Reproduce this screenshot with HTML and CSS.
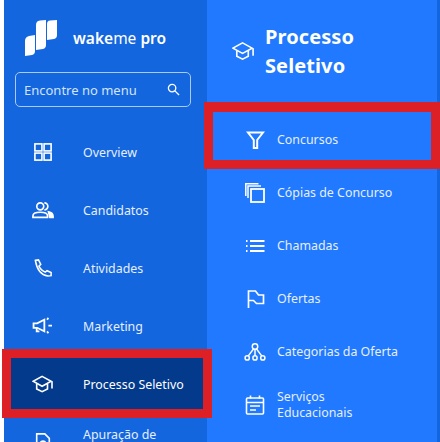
FILE: index.html
```html
<!DOCTYPE html>
<html lang="en">
<head>
    <meta charset="UTF-8">
    <title>wakeme pro</title>
    <link rel="stylesheet" href="styles.css">
</head>
<body>
    <div class="app">
        <!-- Main sidebar -->
        <div class="sidebar">
            <div class="brand">
                <svg class="logo" viewBox="0 0 32 36" fill="#fff">
                    <path d="M0 21Q0 17 4 16L10 15V31Q10 34 7 35L0 36Z"/>
                    <path d="M11 5Q11 1 15 .6L21 0V25Q21 28 18 29L11 30Z"/>
                    <path d="M22 4Q22 1 25 .6L32 0V15Q32 18 29 19L22 20Z"/>
                </svg>
                <span class="brand-name">wake<span class="brand-light">me</span> pro</span>
            </div>
            <div class="search">
                <span>Encontre no menu</span>
                <svg class="search-icon" viewBox="0 0 14 14" fill="none" stroke="#fff" stroke-width="1.400">
                    <circle cx="5.500" cy="5.500" r="4"/>
                    <path d="M8.500 8.500L13 13"/>
                </svg>
            </div>
            <div class="menu">
                <div class="menu-item">
                    <svg class="icon" viewBox="0 0 20 20" fill="none" stroke="#fff" stroke-width="1.800">
                        <rect x="1" y="1" width="7.800" height="7.800"/>
                        <rect x="11.200" y="1" width="7.800" height="7.800"/>
                        <rect x="1" y="11.200" width="7.800" height="7.800"/>
                        <rect x="11.200" y="11.200" width="7.800" height="7.800"/>
                    </svg>
                    <span>Overview</span>
                </div>
                <div class="menu-item">
                    <svg class="icon icon-wide" viewBox="0 0 24 18" fill="none" stroke="#fff" stroke-width="1.800">
                        <circle cx="9" cy="5" r="3.800"/>
                        <path d="M1 17v-1.500q0-4 8-4t8 4v1.500z"/>
                        <path d="M13.500 1.200a3.800 3.800 0 0 1 0 7.600"/>
                        <path d="M18 11q5 1 5 5v1h-3.500z" fill="#fff"/>
                    </svg>
                    <span>Candidatos</span>
                </div>
                <div class="menu-item">
                    <svg class="icon" viewBox="0 0 20 20" fill="none" stroke="#fff" stroke-width="1.700">
                        <path d="M1.500 1.500L5 1L7.500 6L5.500 8Q8 13 12.500 14.500L14.500 13L19 15V18.500L15.500 19Q4 17 1.500 1.500Z"/>
                    </svg>
                    <span>Atividades</span>
                </div>
                <div class="menu-item">
                    <svg class="icon icon-wide" viewBox="0 0 24 20" fill="none" stroke="#fff" stroke-width="2">
                        <path d="M1.500 7h4l8-4v13l-8-4h-4z"/>
                        <path d="M5 12v4h3"/>
                        <path d="M16.500 3l1.500-2M18 9.500h4M16.500 16l1.500 2"/>
                    </svg>
                    <span>Marketing</span>
                </div>
                <div class="menu-item selected">
                    <svg class="icon icon-wide" viewBox="0 0 24 20" fill="none" stroke="#fff" stroke-width="1.800">
                        <path d="M11 1.500l10 5.500-10 5.500L1 7z"/>
                        <path d="M5 10v5.500l6 3 6-3V10"/>
                        <path d="M22 7v8"/>
                    </svg>
                    <span>Processo Seletivo</span>
                </div>
                <div class="menu-item">
                    <svg class="icon" viewBox="0 0 20 20" fill="none" stroke="#fff" stroke-width="1.800">
                        <path d="M3 1h9l5 5v13H3z"/>
                        <circle cx="10" cy="12" r="3"/>
                    </svg>
                    <span class="cut-label">Apuração de</span>
                </div>
            </div>
        </div>

        <!-- Submenu panel -->
        <div class="panel">
            <div class="panel-head">
                <svg class="panel-icon" viewBox="0 0 24 20" fill="none" stroke="#fff" stroke-width="1.700">
                    <path d="M11 1.500l10 5.500-10 5.500L1 7z"/>
                    <path d="M5 10v5.500l6 3 6-3V10"/>
                    <path d="M22 7v8"/>
                </svg>
                <h1>Processo Seletivo</h1>
            </div>
            <div class="submenu">
                <div class="sub-item">
                    <svg class="sub-icon" viewBox="0 0 20 20" fill="none" stroke="#fff" stroke-width="2">
                        <path d="M3 2.500h15l-5.800 7.500V18H8.800v-8z"/>
                    </svg>
                    <span>Concursos</span>
                </div>
                <div class="sub-item">
                    <svg class="sub-icon" viewBox="0 0 20 20" fill="none" stroke="#fff" stroke-width="1.500">
                        <path d="M.8 13V.8h12.700"/>
                        <path d="M3 15V3h13"/>
                        <rect x="6" y="6" width="13" height="13" stroke-width="1.800"/>
                    </svg>
                    <span>Cópias de Concurso</span>
                </div>
                <div class="sub-item">
                    <svg class="sub-icon" viewBox="0 0 20 20" fill="none" stroke="#fff" stroke-width="1.800">
                        <path d="M1 5h1.500M1 10h1.500M1 15h1.500M5 5h14.500M5 10h14.500M5 15h14.500"/>
                    </svg>
                    <span>Chamadas</span>
                </div>
                <div class="sub-item">
                    <svg class="sub-icon" viewBox="0 0 20 20" fill="none" stroke="#fff" stroke-width="1.700">
                        <path d="M3.500 19V2h7l3 4h5v8.500h-7l-3-3h-5"/>
                    </svg>
                    <span>Ofertas</span>
                </div>
                <div class="sub-item">
                    <svg class="sub-icon sub-icon-wide" viewBox="0 0 24 20" fill="none" stroke="#fff" stroke-width="1.600">
                        <circle cx="12" cy="4" r="3"/>
                        <circle cx="3.500" cy="16.500" r="2.300"/>
                        <circle cx="12" cy="16.500" r="2.300"/>
                        <circle cx="20.500" cy="16.500" r="2.300"/>
                        <path d="M10.500 6.500L4.500 14.500M12 7v7M13.500 6.500l6 8"/>
                    </svg>
                    <span>Categorias da Oferta</span>
                </div>
                <div class="sub-item">
                    <svg class="sub-icon" viewBox="0 0 20 20" fill="none" stroke="#fff" stroke-width="1.600">
                        <rect x="1.500" y="3" width="17" height="16" rx="1"/>
                        <path d="M1.500 7.500h17M5.500 .5v3M14.500 .5v3M5 11h10M5 15h6"/>
                    </svg>
                    <span>Serviços Educacionais</span>
                </div>
            </div>
        </div>
    </div>

    <!-- Annotation boxes -->
    <div class="mark mark-side"></div>
    <div class="mark mark-sub"></div>
</body>
</html>
```

FILE: styles.css
```css
html, body {
    margin: 0;
    height: 100%;
    overflow: hidden;
    background-color: #ffffff;
}

body {
    position: relative;
    width: 440px;
    height: 442px;
    padding-left: 4px;
    box-sizing: border-box;
    color: #ffffff;
    font-family: "Noto Sans", Arial, sans-serif;
}

.app {
    display: flex;
    height: 442px;
    overflow: hidden;
    background-color: #1366de;
}

.sidebar {
    flex: 0 0 203px;
    background-color: #1366de;
}

.panel {
    flex: 0 0 230px;
    background-color: #2079fe;
}

.brand {
    display: flex;
    align-items: center;
    padding: 20px 0 0 21px;
    height: 36px;
}

.logo {
    width: 32px;
    height: 36px;
}

.brand-name {
    margin-left: 16px;
    font-size: 15.500px;
    font-weight: 600;
}

.brand-light {
    font-weight: 400;
}

.search {
    display: flex;
    align-items: center;
    justify-content: space-between;
    box-sizing: border-box;
    width: 176px;
    height: 35px;
    margin: 16px 0 0 11px;
    padding: 0 10px 0 8px;
    border: 1px solid #a9cbf5;
    border-radius: 5px;
    font-size: 13px;
    color: #d2e3fb;
}

.search-icon {
    width: 13px;
    height: 13px;
}

.menu {
    margin-top: 16px;
}

.menu-item {
    display: flex;
    align-items: center;
    height: 58px;
    padding-left: 30px;
    font-size: 12.400px;
    color: #e6effd;
}

.menu-item .icon {
    flex: none;
    width: 18px;
    height: 18px;
    margin-right: 31px;
}

.menu-item .icon-wide {
    width: 22px;
    margin-left: -2px;
    margin-right: 29px;
}

.menu-item.selected {
    background-color: #033a8c;
    color: #ffffff;
}

/* this label runs off the bottom of the window, so it sits one line higher */
.cut-label {
    padding-bottom: 16px;
}

.panel-head {
    display: flex;
    align-items: center;
    height: 102px;
    padding-left: 25px;
    box-sizing: border-box;
}

.panel-icon {
    flex: none;
    width: 23px;
    height: 20px;
    margin-right: 10px;
}

h1 {
    margin: 0;
    width: 110px;
    font-size: 20px;
    line-height: 29px;
    font-weight: 700;
    letter-spacing: 0.1px;
}

.submenu {
    padding-top: 11px;
}

.sub-item {
    display: flex;
    align-items: center;
    height: 53px;
    padding-left: 38px;
    font-size: 12.400px;
    color: #e6effd;
}

.sub-icon {
    flex: none;
    width: 20px;
    height: 20px;
    margin-right: 12px;
}

.sub-icon-wide {
    width: 22px;
    margin-left: -1px;
    margin-right: 11px;
}

.sub-item span {
    max-width: 124px;
    line-height: 16px;
}

.mark {
    position: absolute;
    box-sizing: border-box;
    border: 9px solid #dd1f26;
}

.mark-side {
    left: 2px;
    top: 349px;
    width: 210px;
    height: 69px;
}

.mark-sub {
    left: 204px;
    top: 102px;
    width: 236px;
    height: 67px;
    border-top-width: 10px;
}
```
